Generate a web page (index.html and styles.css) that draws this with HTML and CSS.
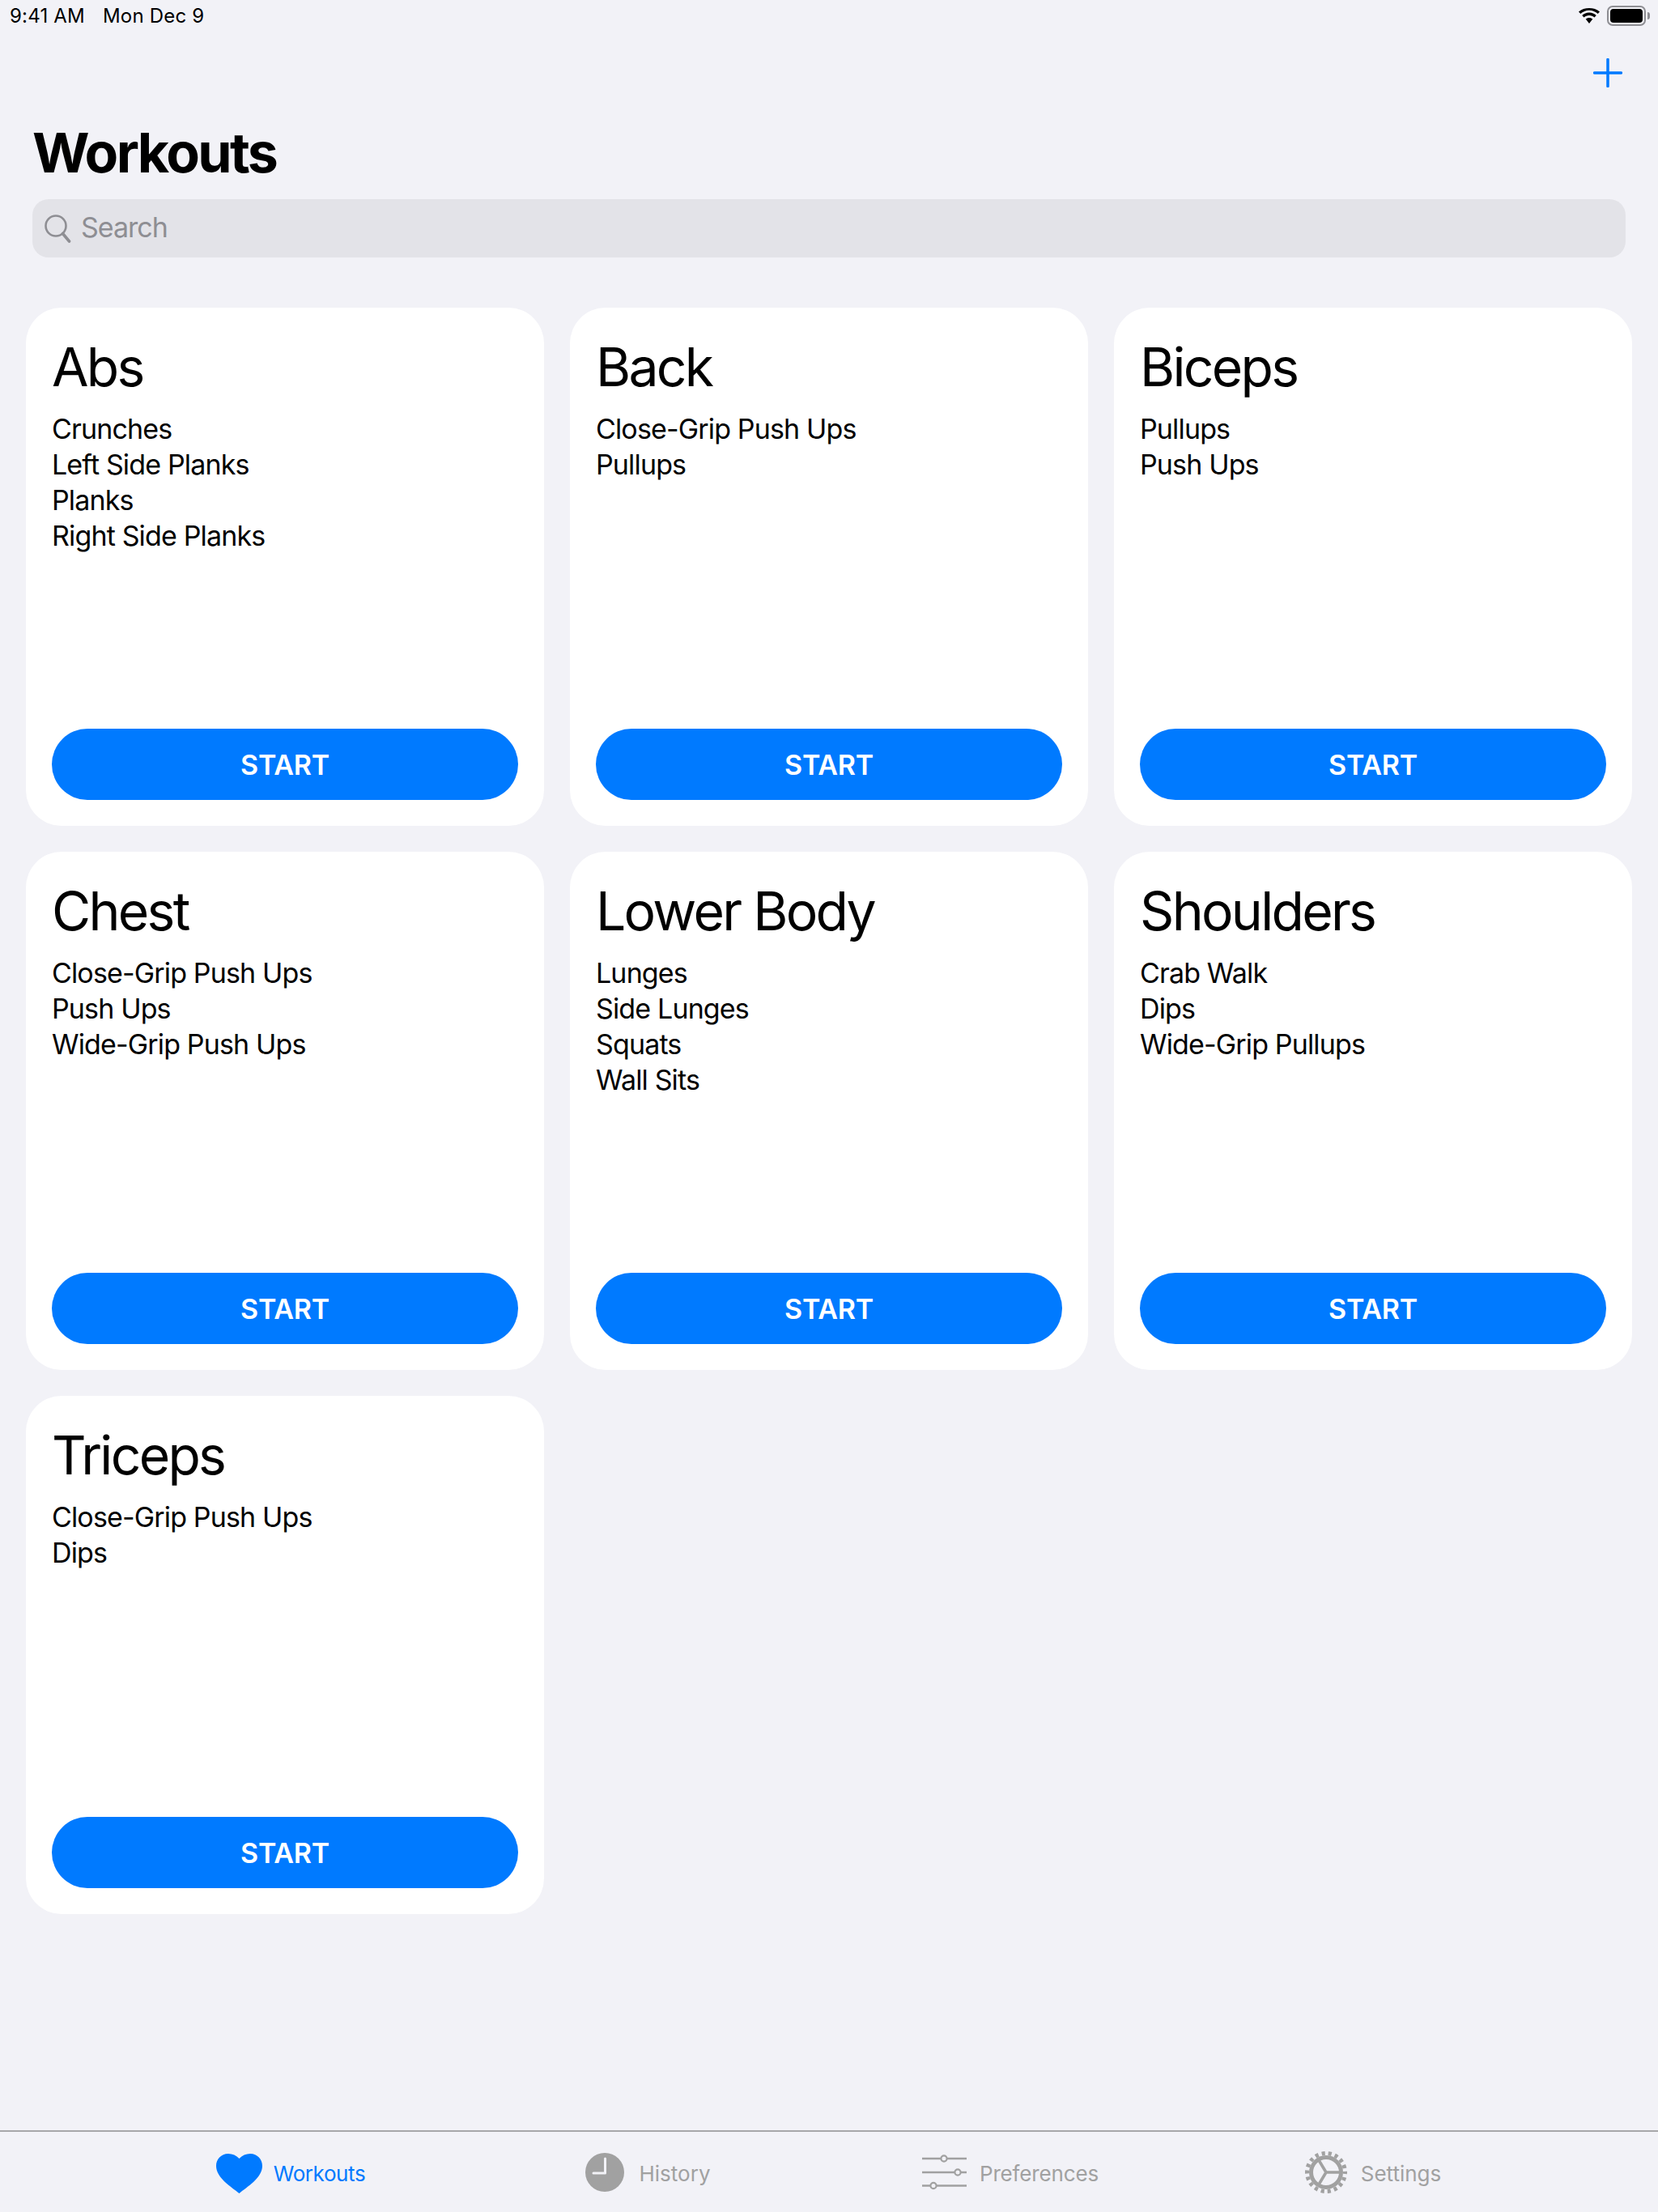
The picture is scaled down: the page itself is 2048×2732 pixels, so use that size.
FILE: index.html
```html
<!DOCTYPE html>
<html lang="en">
<head>
  <meta charset="UTF-8">
  <title>Workouts</title>
  <link rel="stylesheet" href="styles.css">
</head>
<body>
  <!-- status bar -->
  <div class="status-bar">
    <div class="status-time"><span>9:41 AM</span><span>Mon Dec 9</span></div>
    <div class="status-icons">
      <svg class="wifi" width="28" height="20" viewBox="0 0 28 20">
        <path d="M14 2.800c4.100 0 7.900 1.600 10.700 4.200l2.300-2.400C23.500 1.300 18.900 0 14 0S4.500 1.300 1 4.600L3.300 7C6.100 4.400 9.900 2.800 14 2.800z"/>
        <path d="M14 9c2.500 0 4.800.9 6.500 2.400l2.300-2.400C20.500 6.900 17.400 5.600 14 5.600S7.500 6.900 5.200 9l2.300 2.400C9.200 9.900 11.500 9 14 9z"/>
        <path d="M14 12c-1.700 0-3.200.6-4.300 1.600L14 19l4.300-5.400C17.200 12.600 15.700 12 14 12z"/>
      </svg>
      <div class="battery"><div class="battery-fill"></div></div>
      <div class="battery-nub"></div>
    </div>
  </div>

  <!-- nav -->
  <div class="nav">
    <svg class="plus" width="36" height="36" viewBox="0 0 36 36">
      <path d="M18 1.500v33M1.500 18h33" stroke="#007aff" stroke-width="3.500" stroke-linecap="round"/>
    </svg>
    <h1>Workouts</h1>
    <div class="search">
      <svg width="34" height="36" viewBox="0 0 34 36">
        <circle cx="15" cy="15" r="12.500" fill="none" stroke="#8e8e93" stroke-width="2.600"/>
        <path d="M23.500 24.500l8 9.500" stroke="#8e8e93" stroke-width="3.600" stroke-linecap="round"/>
      </svg>
      <span>Search</span>
    </div>
  </div>

  <!-- cards -->
  <div class="grid">
    <div class="card">
      <h2>Abs</h2>
      <ul>
        <li>Crunches</li>
        <li>Left Side Planks</li>
        <li>Planks</li>
        <li>Right Side Planks</li>
      </ul>
      <button class="start">START</button>
    </div>
    <div class="card">
      <h2>Back</h2>
      <ul>
        <li>Close-Grip Push Ups</li>
        <li>Pullups</li>
      </ul>
      <button class="start">START</button>
    </div>
    <div class="card">
      <h2>Biceps</h2>
      <ul>
        <li>Pullups</li>
        <li>Push Ups</li>
      </ul>
      <button class="start">START</button>
    </div>
    <div class="card">
      <h2>Chest</h2>
      <ul>
        <li>Close-Grip Push Ups</li>
        <li>Push Ups</li>
        <li>Wide-Grip Push Ups</li>
      </ul>
      <button class="start">START</button>
    </div>
    <div class="card">
      <h2>Lower Body</h2>
      <ul>
        <li>Lunges</li>
        <li>Side Lunges</li>
        <li>Squats</li>
        <li>Wall Sits</li>
      </ul>
      <button class="start">START</button>
    </div>
    <div class="card">
      <h2>Shoulders</h2>
      <ul>
        <li>Crab Walk</li>
        <li>Dips</li>
        <li>Wide-Grip Pullups</li>
      </ul>
      <button class="start">START</button>
    </div>
    <div class="card">
      <h2>Triceps</h2>
      <ul>
        <li>Close-Grip Push Ups</li>
        <li>Dips</li>
      </ul>
      <button class="start">START</button>
    </div>
  </div>

  <!-- tab bar -->
  <div class="tabbar">
    <div class="tab tab-active">
      <svg class="heart" width="57" height="49" viewBox="0 0 57 49">
        <path d="M28.500 6C32 2 37 0 42 0c9 0 15 7 15 15 0 15-19 26-28.500 34C19 41 0 30 0 15 0 7 6 0 15 0c5 0 10 2 13.500 6z" fill="#007aff"/>
      </svg>
      <span>Workouts</span>
    </div>
    <div class="tab tab-history">
      <svg width="48" height="48" viewBox="0 0 48 48">
        <circle cx="24" cy="24" r="24" fill="#a1a1a1"/>
        <path d="M24.500 7v18H10" fill="none" stroke="#f2f2f7" stroke-width="3" stroke-linecap="round" stroke-linejoin="round"/>
      </svg>
      <span>History</span>
    </div>
    <div class="tab tab-prefs">
      <svg width="55" height="44" viewBox="0 0 55 44">
        <path d="M0 5h55M0 22h55M0 38.500h55" stroke="#a1a1a1" stroke-width="2.500"/>
        <circle cx="27" cy="5" r="3.600" fill="#f2f2f7" stroke="#a1a1a1" stroke-width="2.200"/>
        <circle cx="44" cy="22" r="3.600" fill="#f2f2f7" stroke="#a1a1a1" stroke-width="2.200"/>
        <circle cx="14" cy="38.500" r="3.600" fill="#f2f2f7" stroke="#a1a1a1" stroke-width="2.200"/>
      </svg>
      <span>Preferences</span>
    </div>
    <div class="tab">
      <svg width="52" height="52" viewBox="0 0 52 52">
        <circle cx="26" cy="26" r="23.500" fill="none" stroke="#a1a1a1" stroke-width="5" stroke-dasharray="4.100 4.100" stroke-dashoffset="2"/>
        <circle cx="26" cy="26" r="18.500" fill="none" stroke="#a1a1a1" stroke-width="5"/>
        <path d="M26 26L17 11M26 26H43M26 26L17 41" stroke="#a1a1a1" stroke-width="3.600"/>
      </svg>
      <span>Settings</span>
    </div>
  </div>
</body>
</html>
```
FILE: styles.css
```css
* {
  box-sizing: border-box;
  margin: 0;
  padding: 0;
}
body {
  display: flex;
  flex-direction: column;
  height: 2732px;
  background: #f2f2f7;
  font-family: 'Inter', 'Liberation Sans', sans-serif;
  color: #000;
}
/* status bar */
.status-bar {
  display: flex;
  justify-content: space-between;
  height: 40px;
  padding: 8px 10px 0 12px;
}
.status-time {
  display: flex;
  gap: 22px;
  font-size: 24px;
  line-height: 24px;
  letter-spacing: 0.2px;
}
.status-icons {
  display: flex;
  align-items: flex-start;
}
.wifi {
  margin: 2px 8px 0 0;
}
.battery {
  width: 48px;
  height: 25px;
  margin-top: -1px;
  border: 2px solid #8e8e93;
  border-radius: 7px;
  padding: 2px;
}
.battery-fill {
  height: 100%;
  background: #000;
  border-radius: 4px;
}
.battery-nub {
  width: 3px;
  height: 9px;
  margin: 7px 0 0 2px;
  background: #8e8e93;
  border-radius: 0 3px 3px 0;
}
/* nav */
.nav {
  padding: 32px 40px 0;
}
.plus {
  display: block;
  margin: 0 4px 0 auto;
}
.nav h1 {
  margin-top: 40px;
  font-size: 68px;
  line-height: 80px;
  font-weight: 700;
  letter-spacing: -2.6px;
}
.search {
  display: flex;
  align-items: center;
  gap: 12px;
  height: 72px;
  margin-top: 18px;
  padding: 0 14px;
  background: #e3e3e8;
  border-radius: 20px;
  color: #8e8e93;
  font-size: 34px;
  letter-spacing: -1px;
}
.search span {
  padding-bottom: 3px;
}
/* cards */
.grid {
  display: grid;
  grid-template-columns: repeat(3, 640px);
  grid-auto-rows: 640px;
  gap: 32px;
  margin-top: 62px;
  padding: 0 32px;
}
.card {
  display: flex;
  flex-direction: column;
  padding: 32px;
  background: #fff;
  border-radius: 44px;
}
.card h2 {
  margin-top: 1px;
  font-size: 66px;
  line-height: 80px;
  font-weight: 400;
  letter-spacing: -2.7px;
}
.card ul {
  flex: 1;
  margin-top: 15px;
  list-style: none;
  font-size: 34px;
  line-height: 44px;
  letter-spacing: -0.85px;
}
.start {
  height: 88px;
  border: none;
  border-radius: 44px;
  background: #007aff;
  color: #fff;
  font-family: inherit;
  font-size: 34px;
  font-weight: 600;
  letter-spacing: -0.2px;
}
/* tab bar */
.tabbar {
  display: grid;
  grid-template-columns: repeat(4, 448px);
  align-items: center;
  height: 101px;
  margin-top: auto;
  padding: 0 128px;
  border-top: 2px solid #a7a7aa;
}
.tab {
  display: flex;
  align-items: center;
  justify-content: center;
  gap: 17px;
  color: #a1a1a1;
  font-size: 26px;
}
.tab span {
  padding-top: 4px;
}
.tab-active {
  gap: 14px;
  padding-left: 14px;
  color: #007aff;
}
.tab-active span {
  letter-spacing: -0.4px;
}
.tab-history {
  gap: 19px;
}
.tab-prefs {
  gap: 16px;
  letter-spacing: -0.15px;
}
.heart {
  margin-top: 4px;
}
```
